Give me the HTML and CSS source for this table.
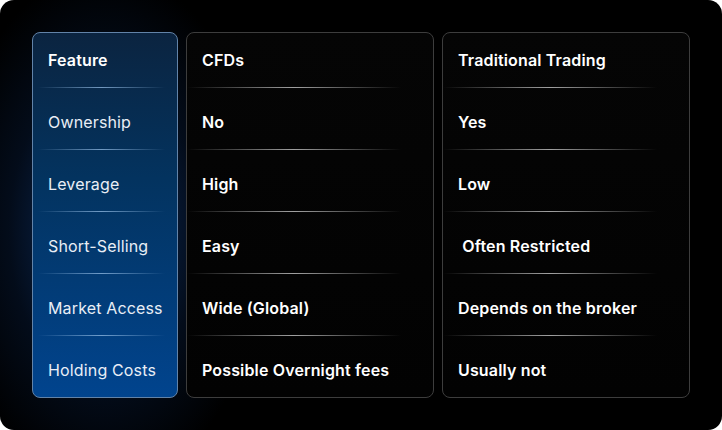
FILE: index.html
```html
<!DOCTYPE html>
<html>
<head>
<meta charset="utf-8">
<link rel="stylesheet" href="styles.css">
</head>
<body>
<div class="panel">
  <div class="col col-feature">
    <div class="cell head">Feature</div><div class="divider"></div>
    <div class="cell">Ownership</div><div class="divider"></div>
    <div class="cell">Leverage</div><div class="divider"></div>
    <div class="cell">Short-Selling</div><div class="divider"></div>
    <div class="cell">Market Access</div><div class="divider"></div>
    <div class="cell">Holding Costs</div>
  </div>
  <div class="col col-dark">
    <div class="cell head">CFDs</div><div class="divider"></div>
    <div class="cell">No</div><div class="divider"></div>
    <div class="cell">High</div><div class="divider"></div>
    <div class="cell">Easy</div><div class="divider"></div>
    <div class="cell">Wide (Global)</div><div class="divider"></div>
    <div class="cell">Possible Overnight fees</div>
  </div>
  <div class="col col-dark">
    <div class="cell head">Traditional Trading</div><div class="divider"></div>
    <div class="cell">Yes</div><div class="divider"></div>
    <div class="cell">Low</div><div class="divider"></div>
    <div class="cell">&nbsp;Often Restricted</div><div class="divider"></div>
    <div class="cell">Depends on the broker</div><div class="divider"></div>
    <div class="cell">Usually not</div>
  </div>
</div>
</body>
</html>
```

FILE: styles.css
```css
html, body {
  margin: 0;
  padding: 0;
  background: #ffffff;
}

.panel {
  width: 722px;
  height: 430px;
  box-sizing: border-box;
  padding: 32px;
  border-radius: 14px;
  background:
    radial-gradient(ellipse 160px 260px at 105px 230px, rgba(16, 62, 130, 0.8), rgba(8, 30, 65, 0.4) 60%, rgba(0, 0, 0, 0) 100%),
    #000000;
  display: grid;
  grid-template-columns: 146px 248px 248px;
  column-gap: 8px;
  font-family: Inter, "Noto Sans", sans-serif;
  font-size: 16px;
  color: #ffffff;
}

.col {
  border: 1px solid #3a3a3a;
  border-radius: 8px;
  display: flex;
  flex-direction: column;
  overflow: hidden;
}

.col-feature {
  border-color: #6283a8;
  background: linear-gradient(180deg, #0b2440 0%, #03335f 40%, #01448e 100%);
}

.col-dark {
  border-color: #3d3d3d;
  background: linear-gradient(180deg, #050505 0%, #020202 100%);
}

.cell {
  height: 54px;
  line-height: 54px;
  padding-left: 15px;
  font-weight: 600;
  white-space: nowrap;
  letter-spacing: 0.15px;
}

.col-feature .cell {
  font-weight: 400;
  color: #e9eef6;
  letter-spacing: 0.15px;
}

.col-feature .cell.head {
  font-weight: 600;
  color: #ffffff;
}

.divider {
  height: 1px;
  margin-bottom: 7px;
  flex: none;
}

.col-feature .divider {
  margin-left: 5px;
  margin-right: 12px;
  background: linear-gradient(90deg, rgba(120, 170, 220, 0) 0%, rgba(150, 190, 230, 0.75) 50%, rgba(120, 170, 220, 0) 100%);
}

.col-dark .divider {
  width: calc(100% - 32px);
  background: linear-gradient(90deg, rgba(255, 255, 255, 0) 0%, rgba(200, 200, 200, 0.8) 50%, rgba(255, 255, 255, 0) 100%);
}
```
